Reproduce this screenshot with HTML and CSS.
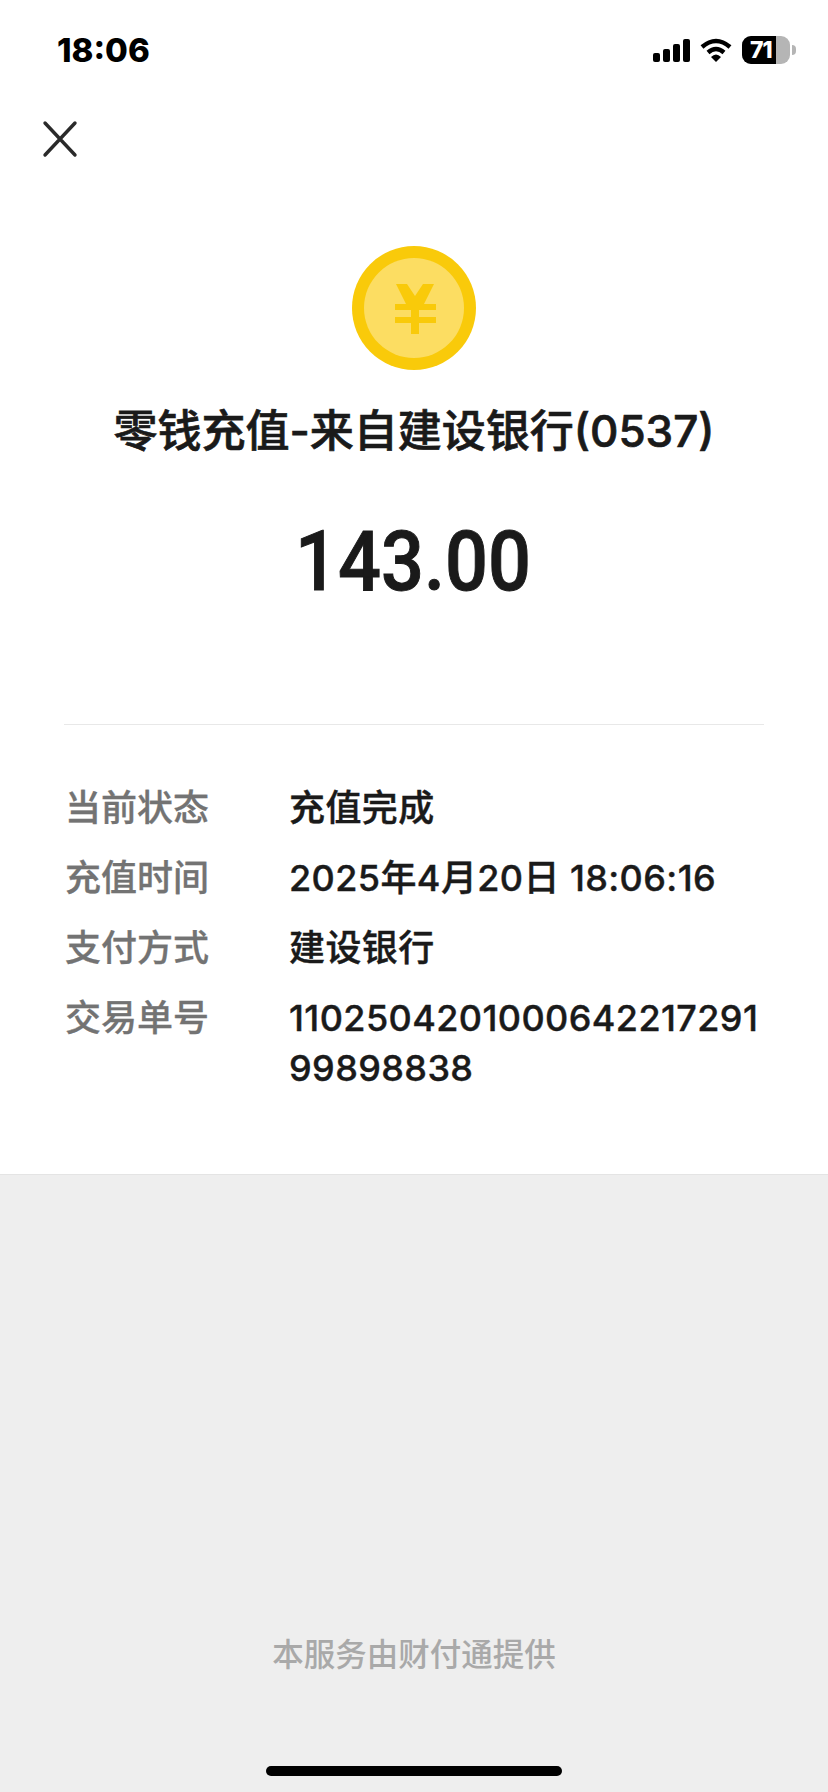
FILE: index.html
```html
<!DOCTYPE html>
<html lang="zh-CN">
    <head>
        <meta charset="UTF-8" />
        <title>零钱充值</title>
        <link rel="stylesheet" href="styles.css">
    </head>
    <body>
        <div class="sheet">
            <!-- Статус-бар -->
            <div class="status-bar">
                <span class="clock">18:06</span>
                <div class="status-icons">
                    <svg class="signal" width="37" height="23" viewBox="0 0 37 23">
                        <rect x="0" y="14" width="7" height="9" rx="2"/>
                        <rect x="10" y="10" width="7" height="13" rx="2"/>
                        <rect x="20" y="5" width="7" height="18" rx="2"/>
                        <rect x="30" y="0" width="7" height="23" rx="2"/>
                    </svg>
                    <svg class="wifi" width="32" height="24" viewBox="0 0 32 24">
                        <path d="M2 9 Q16 -3 30 9" fill="none" stroke="#000" stroke-width="4.4"/>
                        <path d="M8 14.5 Q16 7.5 24 14.5" fill="none" stroke="#000" stroke-width="4.4"/>
                        <path d="M11 19 Q16 14 21 19 L16 24 Z"/>
                    </svg>
                    <div class="battery">
                        <div class="battery-body">
                            <div class="battery-fill"></div>
                            <span class="battery-num">71</span>
                        </div>
                        <div class="battery-cap"></div>
                    </div>
                </div>
            </div>

            <!-- Закрыть -->
            <div class="nav">
                <svg width="36" height="38" viewBox="0 0 36 38">
                    <path d="M3 3 L33 35 M33 3 L3 35" stroke="#2a2a2a" stroke-width="3.4" stroke-linecap="round" fill="none"/>
                </svg>
            </div>

            <div class="summary">
                <svg class="coin" width="124" height="124" viewBox="0 0 124 124">
                    <circle cx="62" cy="62" r="62" fill="#f9ca0a"/>
                    <circle cx="62" cy="62" r="50" fill="#fcdd62"/>
                    <path d="M44 38 L55 38 L63 50 L71 38 L82 38 L72 58 L84 58 L84 64 L67 64 L67 71 L84 71 L84 77 L67 77 L67 88 L59 88 L59 77 L43 77 L43 71 L59 71 L59 64 L43 64 L43 58 L54 58 Z" fill="#f9ca0a"/>
                </svg>
                <h1 class="title">零钱充值-来自建设银行(0537)</h1>
                <div class="amount">143.00</div>
            </div>

            <div class="details">
                <div class="row">
                    <span class="label">当前状态</span>
                    <span class="value">充值完成</span>
                </div>
                <div class="row">
                    <span class="label">充值时间</span>
                    <span class="value">2025年4月20日 18:06:16</span>
                </div>
                <div class="row">
                    <span class="label">支付方式</span>
                    <span class="value">建设银行</span>
                </div>
                <div class="row">
                    <span class="label">交易单号</span>
                    <span class="value">110250420100064221729199898838</span>
                </div>
            </div>
        </div>

        <div class="bottom">
            <p class="provider">本服务由财付通提供</p>
            <div class="home-bar"></div>
        </div>
    </body>
</html>
```

FILE: styles.css
```css
* {
    margin: 0;
    padding: 0;
    box-sizing: border-box;
    font-family: "Inter", "Noto Sans CJK SC", sans-serif;
}

body {
    width: 828px;
    height: 1792px;
    display: flex;
    flex-direction: column;
    background-color: #eeeeee;
    color: #1a1a1a;
    overflow: hidden;
}

/* Белая часть */
.sheet {
    height: 1175px;
    background-color: white;
    border-bottom: 1px solid #e4e4e4;
}

/* Статус-бар */
.status-bar {
    display: flex;
    justify-content: space-between;
    align-items: center;
    height: 100px;
    padding: 0 32px 0 57px;
}
.clock {
    font-size: 33px;
    font-weight: 800;
    color: black;
}
.status-icons {
    display: flex;
    align-items: center;
    gap: 10px;
}
.battery {
    display: flex;
    align-items: center;
    gap: 2px;
}
.battery-body {
    position: relative;
    width: 48px;
    height: 28px;
    border-radius: 9px;
    background-color: #b5b5b5;
    overflow: hidden;
}
.battery-fill {
    width: 34px;
    height: 100%;
    background-color: black;
}
.battery-num {
    position: absolute;
    top: 0;
    left: 8px;
    font-size: 23px;
    font-weight: 800;
    letter-spacing: -1px;
    line-height: 28px;
    color: white;
    white-space: nowrap;
}
.battery-cap {
    width: 4px;
    height: 10px;
    border-radius: 0 4px 4px 0;
    background-color: #b5b5b5;
}

/* Закрыть */
.nav {
    height: 146px;
    padding: 20px 0 0 42px;
}

/* Верхний блок */
.summary {
    display: flex;
    flex-direction: column;
    align-items: center;
    height: 479px;
    border-bottom: 1px solid #e8e8e8;
    margin: 0 64px;
}
.title {
    margin-top: 29px;
    font-size: 44px;
    font-weight: 500;
    -webkit-text-stroke: .7px #1a1a1a;
    line-height: 64px;
    white-space: nowrap;
}
.amount {
    margin-top: 43px;
    margin-right: 2px;
    font-family: "Roboto", sans-serif;
    font-size: 84px;
    font-weight: 500;
    -webkit-text-stroke: 1px #1a1a1a;
    line-height: 112px;
    transform: scaleX(.9);
}

/* Детали */
.details {
    display: flex;
    flex-direction: column;
    gap: 20px;
    padding: 58px 64px 0 65px;
}
.row {
    display: grid;
    grid-template-columns: 224px 1fr;
    font-size: 36px;
    line-height: 50px;
}
.label {
    color: #737373;
    font-weight: 500;
    -webkit-text-stroke: .3px #737373;
}
.value {
    font-weight: 500;
    -webkit-text-stroke: .4px #1a1a1a;
    letter-spacing: .4px;
    word-break: break-all;
}

/* Нижняя часть */
.bottom {
    flex: 1;
    display: flex;
    flex-direction: column;
    align-items: center;
}
.provider {
    margin-top: 456px;
    font-size: 31.5px;
    font-weight: 500;
    line-height: 48px;
    color: #a9a9a9;
}
.home-bar {
    width: 296px;
    height: 10px;
    margin-top: 87px;
    border-radius: 5px;
    background-color: black;
}
```
